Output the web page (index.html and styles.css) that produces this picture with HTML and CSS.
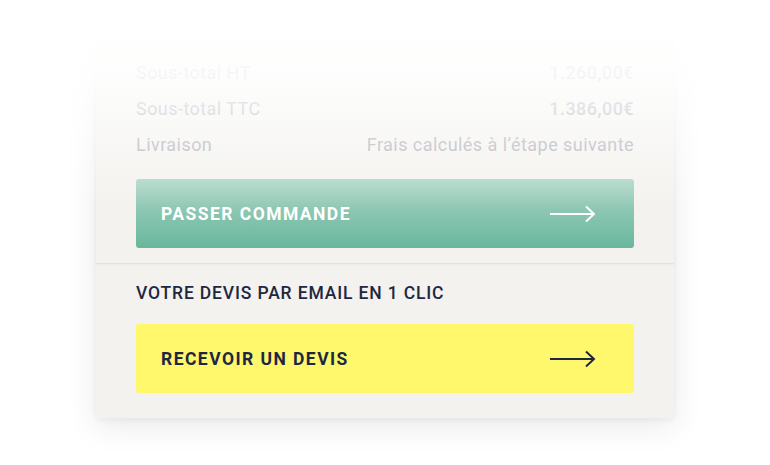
FILE: index.html
```html
<!DOCTYPE html>
<html lang="fr">
<head>
<meta charset="utf-8">
<link rel="stylesheet" href="styles.css">
</head>
<body>
<div class="card">
  <div class="summary">
    <div class="row"><span>Sous-total HT</span><span class="amount">1.260,00€</span></div>
    <div class="row"><span>Sous-total TTC</span><span class="amount">1.386,00€</span></div>
    <div class="row"><span>Livraison</span><span>Frais calculés à l’étape suivante</span></div>
    <a class="btn btn-green" href="#">
      <span>PASSER COMMANDE</span>
      <svg class="arrow" width="46" height="18" viewBox="0 0 46 18"><path d="M0 9H44M36 1.5L44 9L36 16.5" fill="none" stroke="#fff" stroke-width="2"/></svg>
    </a>
    <div class="fade"></div>
  </div>
  <div class="quote">
    <div class="quote-title">VOTRE DEVIS PAR EMAIL EN 1 CLIC</div>
    <a class="btn btn-yellow" href="#">
      <span>RECEVOIR UN DEVIS</span>
      <svg class="arrow" width="46" height="18" viewBox="0 0 46 18"><path d="M0 9H44M36 1.5L44 9L36 16.5" fill="none" stroke="#1f2740" stroke-width="2"/></svg>
    </a>
  </div>
</div>
</body>
</html>
```
FILE: styles.css
```css
html, body {
  margin: 0;
  padding: 0;
  background: #fff;
}
body {
  font-family: Roboto, "Liberation Sans", sans-serif;
  width: 770px;
  height: 465px;
  overflow: hidden;
}
.card {
  margin: 40px 0 0 96px;
  width: 578px;
  background: #f3f2ee;
  box-shadow: 0 8px 28px rgba(40, 40, 60, 0.10), 0 2px 6px rgba(40, 40, 60, 0.05);
}
.summary {
  position: relative;
  padding: 14px 40px 15px;
  border-bottom: 1px solid #e2e1dc;
  box-shadow: 0 1px 2px rgba(0,0,0,0.04);
}
.row {
  display: flex;
  justify-content: space-between;
  align-items: center;
  height: 36px;
  font-size: 18px;
  color: #a9a9b5;
  letter-spacing: 0.45px;
}
.amount {
  font-weight: 500;
}
.btn {
  display: flex;
  align-items: center;
  justify-content: space-between;
  height: 69px;
  padding: 0 38px 0 25px;
  border-radius: 3px;
  text-decoration: none;
  font-size: 17.5px;
  font-weight: 700;
  letter-spacing: 1.45px;
}
.btn-green {
  margin-top: 17px;
  color: #fff;
  background: linear-gradient(#a9d4c4, #69b79d);
}
.btn-yellow {
  color: #1f2740;
  background: #fff86d;
}
.fade {
  position: absolute;
  left: -30px;
  right: -30px;
  top: -20px;
  height: 190px;
  background: linear-gradient(rgba(255,255,255,1) 0%, rgba(255,255,255,0.88) 30%, rgba(255,255,255,0.3) 75%, rgba(255,255,255,0) 100%);
  pointer-events: none;
}
.quote {
  padding: 19px 40px 25px;
}
.quote-title {
  font-size: 17.5px;
  font-weight: 500;
  line-height: 20px;
  color: #1f2740;
  letter-spacing: 0.85px;
  margin-bottom: 21px;
}
```
